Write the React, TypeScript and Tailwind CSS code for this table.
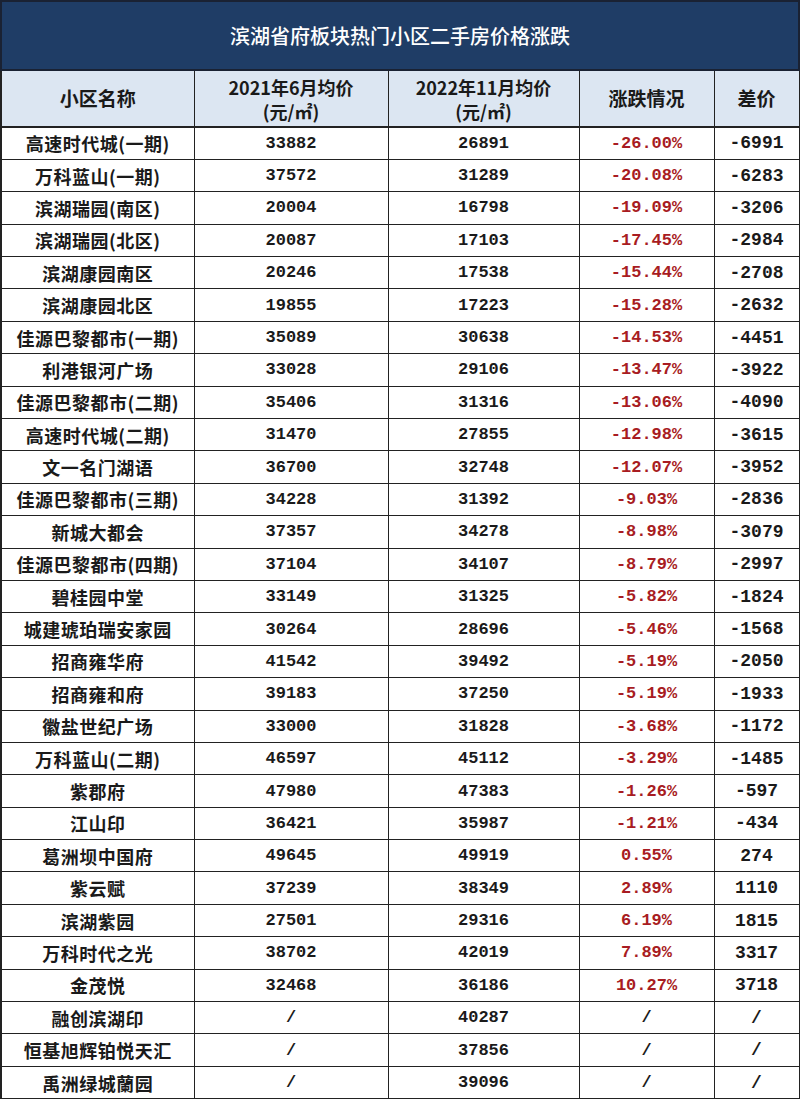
const rows: [string, string, string, string, string][] = [
  ['高速时代城(一期)', '33882', '26891', '-26.00%', '-6991'],
  ['万科蓝山(一期)', '37572', '31289', '-20.08%', '-6283'],
  ['滨湖瑞园(南区)', '20004', '16798', '-19.09%', '-3206'],
  ['滨湖瑞园(北区)', '20087', '17103', '-17.45%', '-2984'],
  ['滨湖康园南区', '20246', '17538', '-15.44%', '-2708'],
  ['滨湖康园北区', '19855', '17223', '-15.28%', '-2632'],
  ['佳源巴黎都市(一期)', '35089', '30638', '-14.53%', '-4451'],
  ['利港银河广场', '33028', '29106', '-13.47%', '-3922'],
  ['佳源巴黎都市(二期)', '35406', '31316', '-13.06%', '-4090'],
  ['高速时代城(二期)', '31470', '27855', '-12.98%', '-3615'],
  ['文一名门湖语', '36700', '32748', '-12.07%', '-3952'],
  ['佳源巴黎都市(三期)', '34228', '31392', '-9.03%', '-2836'],
  ['新城大都会', '37357', '34278', '-8.98%', '-3079'],
  ['佳源巴黎都市(四期)', '37104', '34107', '-8.79%', '-2997'],
  ['碧桂园中堂', '33149', '31325', '-5.82%', '-1824'],
  ['城建琥珀瑞安家园', '30264', '28696', '-5.46%', '-1568'],
  ['招商雍华府', '41542', '39492', '-5.19%', '-2050'],
  ['招商雍和府', '39183', '37250', '-5.19%', '-1933'],
  ['徽盐世纪广场', '33000', '31828', '-3.68%', '-1172'],
  ['万科蓝山(二期)', '46597', '45112', '-3.29%', '-1485'],
  ['紫郡府', '47980', '47383', '-1.26%', '-597'],
  ['江山印', '36421', '35987', '-1.21%', '-434'],
  ['葛洲坝中国府', '49645', '49919', '0.55%', '274'],
  ['紫云赋', '37239', '38349', '2.89%', '1110'],
  ['滨湖紫园', '27501', '29316', '6.19%', '1815'],
  ['万科时代之光', '38702', '42019', '7.89%', '3317'],
  ['金茂悦', '32468', '36186', '10.27%', '3718'],
  ['融创滨湖印', '/', '40287', '/', '/'],
  ['恒基旭辉铂悦天汇', '/', '37856', '/', '/'],
  ['禹洲绿城蘭园', '/', '39096', '/', '/'],
];

const cjk = "font-['Noto_Sans_CJK_SC',sans-serif]";
const mono = "font-['Liberation_Mono','Noto_Sans_CJK_SC',monospace]";

export default function App() {
  return (
    <div className="w-[800px] h-[1101px] bg-white overflow-hidden">
      <table className="w-[798px] table-fixed border-collapse">
        <colgroup>
          <col className="w-[193px]" />
          <col className="w-[194px]" />
          <col className="w-[191px]" />
          <col className="w-[135px]" />
          <col className="w-[85px]" />
        </colgroup>
        <thead>
          <tr className="h-[69px] bg-[#1f3d66]">
            <th
              colSpan={5}
              className={`${cjk} border-2 border-[#1a2233] text-white text-[20px] font-medium text-center`}
            >
              滨湖省府板块热门小区二手房价格涨跌
            </th>
          </tr>
          <tr className="h-[57px] bg-[#dce6f2] text-[#1a1a1a]">
            <th className={`${cjk} border border-[#222] border-l-2 border-b-2 text-[19px] font-bold`}>
              小区名称
            </th>
            <th className={`${cjk} border border-[#222] border-b-2 text-[18px] font-bold leading-[24px]`}>
              <div>2021年6月均价</div>
              <div>(元/㎡)</div>
            </th>
            <th className={`${cjk} border border-[#222] border-b-2 text-[18px] font-bold leading-[24px]`}>
              <div>2022年11月均价</div>
              <div>(元/㎡)</div>
            </th>
            <th className={`${cjk} border border-[#222] border-b-2 text-[19px] font-bold`}>
              涨跌情况
            </th>
            <th className={`${cjk} border border-[#222] border-b-2 text-[19px] font-bold`}>
              差价
            </th>
          </tr>
        </thead>
        <tbody>
          {rows.map(([name, a, b, pct, diff]) => (
            <tr key={name} className="h-[32.4px] text-[#1a1a1a]">
              <td className={`${cjk} border border-[#222] border-l-2 text-center text-[18px] font-bold leading-none tracking-[0.5px]`}>
                {name}
              </td>
              <td className={`${mono} border border-[#222] text-center text-[17px] font-bold leading-none`}>
                {a}
              </td>
              <td className={`${mono} border border-[#222] text-center text-[17px] font-bold leading-none`}>
                {b}
              </td>
              <td
                className={`${mono} border border-[#222] text-center text-[17px] font-bold leading-none ${
                  pct === '/' ? 'text-[#1a1a1a]' : 'text-[#a81c22]'
                }`}
              >
                {pct}
              </td>
              <td className={`${mono} border border-[#222] text-center text-[18px] font-bold leading-none`}>
                {diff}
              </td>
            </tr>
          ))}
        </tbody>
      </table>
    </div>
  );
}
